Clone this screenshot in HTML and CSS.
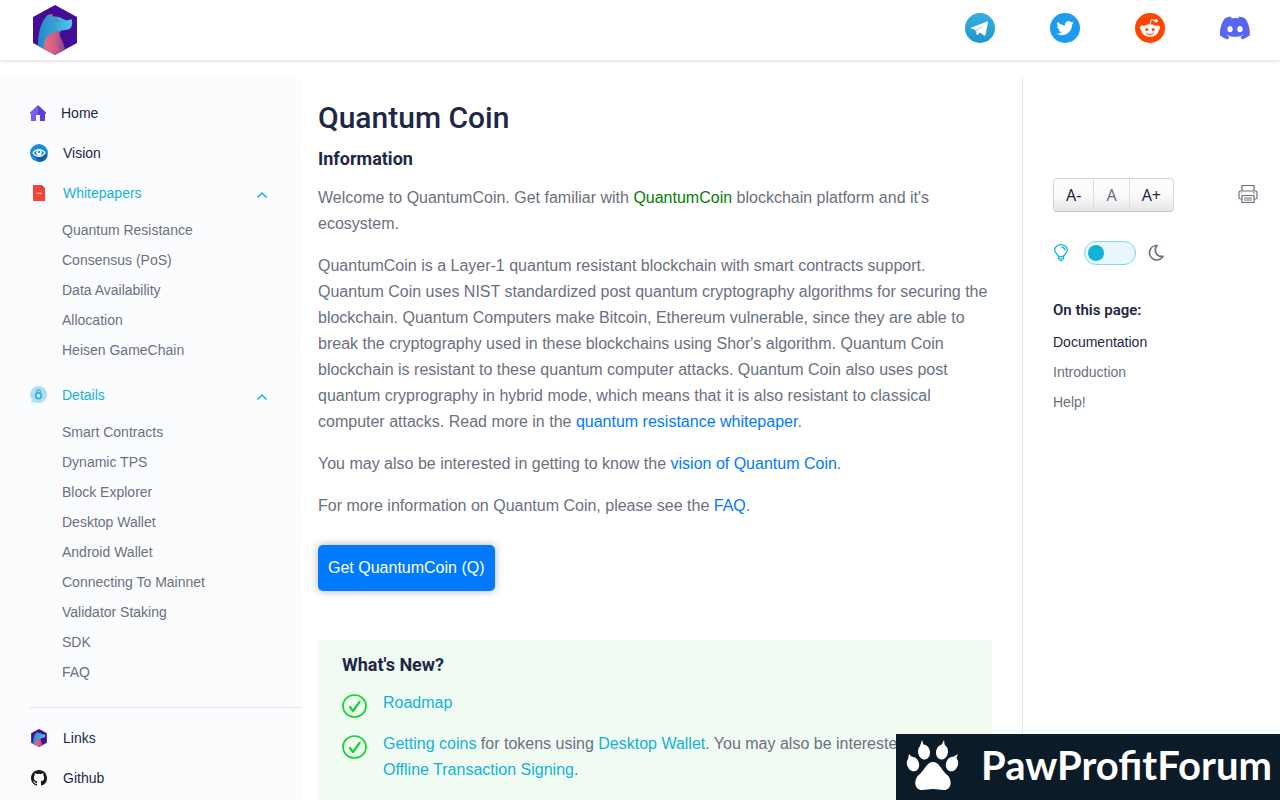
FILE: index.html
```html
<!DOCTYPE html>
<html lang="en">
<head>
<meta charset="utf-8">
<meta name="viewport" content="width=device-width, initial-scale=1">
<title>Quantum Coin</title>
<link rel="stylesheet" href="styles.css">
</head>
<body>
<svg class="defs" aria-hidden="true">
  <defs>
    <linearGradient id="gBlue" x1="0" y1="0" x2="1" y2="0"><stop offset="0" stop-color="#2b83c6"/><stop offset=".5" stop-color="#33a6d8"/><stop offset="1" stop-color="#4cc9e6"/></linearGradient>
    <linearGradient id="gPink" x1="0" y1="0" x2="1" y2="0"><stop offset="0" stop-color="#f2697c"/><stop offset=".5" stop-color="#d05f88"/><stop offset="1" stop-color="#8f4796"/></linearGradient>
    <linearGradient id="gTele" x1="0" y1="0" x2="0" y2="1"><stop offset="0" stop-color="#37aee2"/><stop offset="1" stop-color="#1e96c8"/></linearGradient>
    <clipPath id="hex"><path d="M22 0 44 12V38L22 50 0 38V12z"/></clipPath>
    <symbol id="wolf" viewBox="0 0 44 50">
      <g clip-path="url(#hex)">
        <path fill="#430d96" d="M0 0h44v50H0z"/>
        <path fill="url(#gBlue)" d="M5 46C5 38 5 30 7 24C9 17 12 11 16 9.500L18.500 9L20 11.500C25 11 29 13 32 15C35 15.500 37 15 38.500 14C40 19 39 23.500 35 24.500C32 25.500 29 24.500 27 26.500L20 48z"/>
        <path fill="url(#gPink)" d="M11 46C10 37 13 28 26 25.500C26 32 31 36 32 46L22 52z"/>
        <path fill="#8b4a98" opacity=".35" d="M26 25.500C25 33 29 40 27 50L32 46C31 36 26 32 26 25.500z"/>
        <path fill="#c9527d" d="M17 9.500l2-.5 1 2.700L18 11.500zM21.500 14.500l4.500.5-1.500 1.500-2.500-.5z"/>
      </g>
    </symbol>
    <symbol id="check" viewBox="0 0 25 24">
      <ellipse cx="12.500" cy="12" rx="11.500" ry="11" fill="none" stroke="#12d62f" stroke-width="1.700"/>
      <path d="M8 13l3 4 6.500-9" fill="none" stroke="#12d62f" stroke-width="2.200" stroke-linecap="round" stroke-linejoin="round"/>
    </symbol>
    <symbol id="up" viewBox="0 0 12 8"><path d="M1.500 6.500 6 2l4.500 4.500" fill="none" stroke="#14b1d9" stroke-width="1.500"/></symbol>
  </defs>
</svg>

<header class="topbar">
  <a class="brand" href="#" aria-label="Quantum Coin"><svg width="44" height="50"><use href="#wolf"/></svg></a>
  <nav class="social" aria-label="Community">
    <a href="#" aria-label="Telegram"><svg width="30" height="30" viewBox="0 0 30 30"><circle cx="15" cy="15" r="15" fill="url(#gTele)"/><path fill="#fff" d="M6 14.800 22.200 8.600c.6-.2 1 .1.800.9l-2.500 12.200c-.2.900-.8 1.100-1.500.7l-4-3-2 2.200c-.8.800-1.200.400-1.400-.3l-1.200-4.500-4.300-1.300c-.7-.3-.7-.5-.1-.7z"/><path fill="#c8daea" d="m10.600 16.700 9.400-5.800-7.500 7.100-.5 3.500z"/></svg></a>
    <a href="#" aria-label="Twitter"><svg width="30" height="30" viewBox="0 0 30 30"><circle cx="15" cy="15" r="15" fill="#1d9bf0"/><path transform="translate(6.500 6.500) scale(.72)" fill="#fff" d="M23.950 4.570a10 10 0 0 1-2.820.78 4.960 4.960 0 0 0 2.160-2.730c-.95.560-2 .960-3.130 1.190a4.920 4.920 0 0 0-8.380 4.480C7.690 8.100 4.070 6.130 1.640 3.160a4.920 4.920 0 0 0 1.520 6.570 4.900 4.900 0 0 1-2.230-.61v.06a4.920 4.920 0 0 0 3.950 4.830 5 5 0 0 1-2.210.08 4.940 4.940 0 0 0 4.600 3.420A9.870 9.870 0 0 1 0 19.540a14 14 0 0 0 7.550 2.210c9.050 0 14-7.500 14-13.980 0-.21 0-.42-.02-.63a9.940 9.940 0 0 0 2.460-2.550z"/></svg></a>
    <a href="#" aria-label="Reddit"><svg width="30" height="30" viewBox="0 0 30 30"><circle cx="15" cy="15" r="15" fill="#ff4500"/><g fill="#fff"><ellipse cx="15" cy="17.500" rx="8.600" ry="6.300"/><circle cx="7.200" cy="14.800" r="2.300"/><circle cx="22.800" cy="14.800" r="2.300"/><circle cx="21.200" cy="7.800" r="1.700"/></g><path d="M15 11.500 16.200 6.600 21 7.700" fill="none" stroke="#fff"/><g fill="#ff4500"><circle cx="11.800" cy="16.500" r="1.500"/><circle cx="18.200" cy="16.500" r="1.500"/></g><path d="M11.500 20.300c2 1.700 5 1.700 7 0" fill="none" stroke="#ff4500" stroke-linecap="round"/></svg></a>
    <a href="#" aria-label="Discord"><svg width="30" height="30" viewBox="0 0 24 24"><path fill="#5865f2" d="M20.320 4.370a19.800 19.800 0 0 0-4.890-1.520.07.07 0 0 0-.08.040c-.21.380-.44.870-.61 1.250a18.300 18.300 0 0 0-5.490 0 12.600 12.600 0 0 0-.62-1.250.08.08 0 0 0-.08-.04 19.700 19.700 0 0 0-4.880 1.520C.53 9.050-.32 13.580.1 18.060a.08.08 0 0 0 .03.060 19.900 19.900 0 0 0 5.990 3.030.08.08 0 0 0 .08-.03c.46-.63.870-1.300 1.230-1.990a.08.08 0 0 0-.04-.11 13.100 13.100 0 0 1-1.870-.89.08.08 0 0 1 0-.13l.37-.29c3.930 1.790 8.180 1.790 12.060 0l.37.290c.040.040.040.100 0 .13-.6.350-1.220.650-1.870.89a.08.08 0 0 0-.04.110c.36.700.770 1.360 1.220 1.990.020.030.050.040.080.030a19.800 19.800 0 0 0 6.030-3.090c.5-5.180-.84-9.670-3.550-13.690zM8.020 15.330c-1.180 0-2.160-1.080-2.160-2.420s.96-2.420 2.160-2.420c1.210 0 2.180 1.100 2.160 2.420 0 1.340-.96 2.420-2.160 2.420zm7.970 0c-1.180 0-2.160-1.080-2.160-2.420s.96-2.420 2.160-2.420c1.210 0 2.180 1.100 2.160 2.420 0 1.340-.95 2.420-2.160 2.420z"/></svg></a>
  </nav>
</header>

<div class="page">
  <aside class="sidebar">
    <nav aria-label="Main">
      <a class="item" href="#"><svg class="ico" viewBox="0 0 18 18"><path fill="#7b5cf0" d="M8 1 0 8.500V10h1v7h5v-6h2z"/><path fill="#5b3de0" d="M8 1l8 7.500V10h-1v7h-5v-6H8z"/></svg><span class="home-label">Home</span></a>
      <a class="item" href="#"><svg class="ico" viewBox="0 0 18 18"><circle cx="9" cy="9" r="9" fill="#1b8ade"/><path fill="#145f9e" d="M3 10 9 18a9 9 0 0 0 8.500-6L15 9l-6 4z"/><path d="M3 9c3-4.500 9-4.500 12 0-3 4.500-9 4.500-12 0z" fill="none" stroke="#fff" stroke-width="1.300"/><circle cx="9" cy="9" r="2.700" fill="#fff"/><path d="M9 7v2" stroke="#1565a5" stroke-width="1.500"/></svg><span>Vision</span></a>
      <a class="item open" href="#"><svg class="ico" viewBox="0 0 18 18"><path fill="#f04438" d="M3 1h8.500L15 4.500V17H3z"/><path fill="#bd3028" d="M11.500 1 15 4.500h-3.500z"/><path d="M6.500 9.300h5" stroke="#fbb" stroke-width="1.200"/></svg><span>Whitepapers</span><svg class="caret" width="12" height="8"><use href="#up"/></svg></a>
      <ul class="sub">
        <li><a href="#">Quantum Resistance</a></li>
        <li><a href="#">Consensus (PoS)</a></li>
        <li><a href="#">Data Availability</a></li>
        <li><a href="#">Allocation</a></li>
        <li><a href="#">Heisen GameChain</a></li>
      </ul>
      <a class="item open" href="#"><svg class="ico" viewBox="0 0 18 18"><path fill="#ade0f5" d="M8.500 0a8.500 8.500 0 1 1-4 16L1 17l.8-3.500A8.500 8.500 0 0 1 8.500 0z"/><circle cx="8.500" cy="9.800" r="2.700" fill="#fff" stroke="#38b3dc" stroke-width="2"/><path d="M6.500 7V5.800a2 2 0 0 1 4 0V7" fill="none" stroke="#38b3dc" stroke-width="1.200"/></svg><span class="details-label">Details</span><svg class="caret" width="12" height="8"><use href="#up"/></svg></a>
      <ul class="sub">
        <li><a href="#">Smart Contracts</a></li>
        <li><a href="#">Dynamic TPS</a></li>
        <li><a href="#">Block Explorer</a></li>
        <li><a href="#">Desktop Wallet</a></li>
        <li><a href="#">Android Wallet</a></li>
        <li><a href="#">Connecting To Mainnet</a></li>
        <li><a href="#">Validator Staking</a></li>
        <li><a href="#">SDK</a></li>
        <li><a href="#">FAQ</a></li>
      </ul>
      <hr class="rule">
      <a class="item" href="#"><svg class="ico"><use href="#wolf"/></svg><span>Links</span></a>
      <a class="item" href="#"><svg class="ico" viewBox="-1 -1 18 18"><path fill="#191717" d="M8 0C3.580 0 0 3.580 0 8c0 3.540 2.290 6.530 5.470 7.590.4.070.550-.17.550-.38 0-.19-.01-.82-.01-1.490-2.010.370-2.530-.49-2.690-.94-.09-.23-.48-.94-.82-1.130-.28-.15-.68-.52-.01-.53.630-.01 1.080.580 1.230.820.720 1.210 1.870.870 2.330.660.070-.52.280-.87.510-1.070-1.780-.2-3.640-.89-3.640-3.950 0-.87.310-1.590.820-2.150-.08-.2-.36-1.020.080-2.120 0 0 .67-.21 2.200.820a7.600 7.600 0 0 1 4 0c1.530-1.040 2.200-.82 2.200-.82.440 1.100.160 1.920.080 2.120.510.560.820 1.270.820 2.150 0 3.070-1.870 3.750-3.650 3.950.290.250.540.730.540 1.480 0 1.070-.01 1.930-.01 2.200 0 .21.150.460.550.380A8 8 0 0 0 16 8c0-4.420-3.580-8-8-8z"/></svg><span>Github</span></a>
    </nav>
  </aside>

  <main class="content">
    <h1>Quantum Coin</h1>
    <h2>Information</h2>
    <p>Welcome to QuantumCoin. Get familiar with <span class="green">QuantumCoin</span> blockchain platform and it's ecosystem.</p>
    <p>QuantumCoin is a Layer-1 quantum resistant blockchain with smart contracts support. Quantum Coin uses NIST standardized post quantum cryptography algorithms for securing the blockchain. Quantum Computers make Bitcoin, Ethereum vulnerable, since they are able to break the cryptography used in these blockchains using Shor's algorithm. Quantum Coin blockchain is resistant to these quantum computer attacks. Quantum Coin also uses post quantum cryprography in hybrid mode, which means that it is also resistant to classical computer attacks. Read more in the <a class="link" href="#">quantum resistance whitepaper</a>.</p>
    <p>You may also be interested in getting to know the <a class="link" href="#">vision of Quantum Coin</a>.</p>
    <p>For more information on Quantum Coin, please see the <a class="link" href="#">FAQ</a>.</p>
    <button class="cta" type="button">Get QuantumCoin (Q)</button>
    <section class="news">
      <h2>What's New?</h2>
      <ul class="news-list">
        <li><svg class="tick"><use href="#check"/></svg><span><a class="teal" href="#">Roadmap</a></span></li>
        <li><svg class="tick"><use href="#check"/></svg><span><a class="teal" href="#">Getting coins</a> for tokens using <a class="teal" href="#">Desktop Wallet</a>. You may also be interested in <a class="teal" href="#">Offline Transaction Signing</a>.</span></li>
      </ul>
    </section>
  </main>

  <aside class="tools">
    <div class="tool-row">
      <div class="sizes" role="group" aria-label="Text size"><button type="button">A-</button><button class="mid" type="button">A</button><button type="button">A+</button></div>
      <button class="plain" type="button" aria-label="Print"><svg width="20" height="20" viewBox="0 0 20 20" fill="none" stroke="#6a6f82" stroke-width="1.200"><path d="M4 7V1.500h12V7M4 15H2.500A1.500 1.500 0 0 1 1 13.500V8.500A1.500 1.500 0 0 1 2.500 7h15A1.500 1.500 0 0 1 19 8.500v5a1.500 1.500 0 0 1-1.500 1.500H16M4 11.500h12v7H4zM6 14h8M6 16h8M3 9h1M15 9h2"/></svg></button>
    </div>
    <div class="theme">
      <svg width="16" height="18" viewBox="0 0 16 18" fill="none" stroke="#14b1d9" stroke-width="1.300"><path d="M5.500 12.500c0-2-3.800-3-3.800-6.200a6.300 5.600 0 0 1 12.600 0c0 3.200-3.800 4.200-3.800 6.200zM5.500 12.500v2.300h5v-2.300M6.500 16.700h3M8.500 3A3.500 3.500 0 0 1 12 6.500"/></svg>
      <input class="switch" type="checkbox" role="switch" aria-label="Dark mode">
      <svg width="16" height="18" viewBox="1 0 16 18" fill="none" stroke="#6a6f82" stroke-width="1.700" stroke-linejoin="round"><path d="M10 1.500A7.200 7.200 0 1 0 16 12.300C10 13.500 6 7 10 1.500z"/></svg>
    </div>
    <nav class="toc" aria-labelledby="toc-title">
      <h3 id="toc-title">On this page:</h3>
      <a class="active" href="#">Documentation</a>
      <a href="#">Introduction</a>
      <a href="#">Help!</a>
    </nav>
  </aside>
</div>

<div class="badge">
  <svg width="54" height="54" viewBox="0 0 54 54" fill="#fff"><path d="M27 24c6 0 8 7 13 12 7 5 6 16-2 16-4 0-7-1-11-1s-7 1-11 1c-8 0-9-11-2-16 5-5 7-12 13-12z"/><ellipse cx="7" cy="26" rx="6" ry="7.500" transform="rotate(-20 7 26)"/><ellipse cx="18" cy="14" rx="6" ry="7.500" transform="rotate(-10 18 14)"/><ellipse cx="36" cy="14" rx="6" ry="7.500" transform="rotate(10 36 14)"/><ellipse cx="46" cy="26" rx="6" ry="7.500" transform="rotate(20 46 26)"/><path d="M14 8l2-6 2 6zM35 8l3-6 1 7zM2 21l1-5 4 4zM47 19l5-3-2 5z"/></svg>
  <span>PawProfitForum</span>
</div>
</body>
</html>
```

FILE: styles.css
```css
* { box-sizing: border-box; }
body {
  margin: 0;
  height: 100vh;
  overflow: hidden;
  display: flex;
  flex-direction: column;
  background: #fff;
  color: #6b707f;
  font: 16px/26px "Liberation Sans", Arial, sans-serif;
}
a { color: inherit; text-decoration: none; }
ul { list-style: none; margin: 0; padding: 0; }
h1, h2, h3 { margin: 0; color: #1d2746; font-family: Roboto, sans-serif; }
button { font: inherit; cursor: pointer; }
svg { display: block; flex: none; }
.defs { position: absolute; width: 0; height: 0; }

.topbar {
  flex: none;
  display: flex;
  justify-content: space-between;
  align-items: center;
  height: 60px;
  padding: 0 30px 0 33px;
  box-shadow: 0 1px 4px rgba(0, 0, 0, .16);
}
.social { display: flex; gap: 55px; padding-bottom: 4px; }

.page {
  flex: 1;
  min-height: 0;
  margin-top: 18px;
  display: grid;
  grid-template-columns: 302px minmax(0, 1fr) 258px;
}

.sidebar {
  overflow: hidden;
  padding: 15px 0 0 30px;
  background: #fbfcfe;
  font-size: 14px;
}
.item {
  display: flex;
  align-items: center;
  gap: 15px;
  height: 40px;
  padding-right: 34px;
  color: #1d2746;
}
.item.open { color: #14b1d9; }
.ico { width: 18px; height: 18px; }
.home-label { margin-left: -2px; }
.details-label { margin-left: -1px; }
.caret { margin: 3px 0 0 auto; }
.sub { padding: 2px 0 10px 32px; line-height: 30px; }
.rule { margin: 10px 0; border: 0; border-top: 1px solid #e1e4ea; }

.content {
  display: flex;
  flex-direction: column;
  align-items: flex-start;
  padding: 22px 30px 0 16px;
  overflow: hidden;
}
h1 { font-size: 30px; line-height: 36px; font-weight: 500; }
h2 { font-size: 18px; line-height: 22px; font-weight: 700; }
.content h1 { margin-bottom: 12px; }
.content > h2 { margin-bottom: 15px; }
p { margin: 0 0 16px; }
.green { color: #008000; }
.link { color: #007bff; }
.teal { color: #14b1d9; }
.cta {
  flex: none;
  margin: 10px 0 49px;
  padding: 10px;
  border: 0;
  border-radius: 5px;
  background: #007bff;
  color: #fff;
  box-shadow: 0 0 8px rgba(0, 0, 0, .3);
}
.news {
  flex: 1 0 auto;
  align-self: stretch;
  padding: 14px 24px;
  border-radius: 3px;
  background: #f0fcf2;
}
.news-list { display: grid; gap: 13px; margin-top: 14px; }
.news-list li { display: flex; gap: 16px; }
.tick { width: 25px; height: 24px; margin-top: 4px; }

.tools { padding: 100px 22px 0 30px; border-left: 1px solid #e6e8ec; }
.tool-row { display: flex; justify-content: space-between; align-items: center; }
.sizes {
  display: flex;
  border: 1px solid #d5d6da;
  border-bottom-color: #c4c5ca;
  border-radius: 4px;
  background: linear-gradient(#fff, #fafafa 50%, #e6e6e8);
  overflow: hidden;
}
.sizes button {
  height: 32px;
  padding: 0 12px;
  border: 0;
  background: none;
  color: #1d2746;
  font-family: "Noto Sans", sans-serif;
}
.sizes button + button { border-left: 1px solid #dcdde1; }
.sizes .mid { color: #6b707f; }
.plain { padding: 0; border: 0; background: none; }
.plain svg { margin-top: -3px; }
.theme { display: flex; align-items: center; gap: 12px; margin-top: 29px; }
.theme .switch { margin-left: 3px; }
.switch {
  appearance: none;
  width: 52px;
  height: 24px;
  margin: 0;
  padding: 3px;
  border: 1px solid #7fd9ec;
  border-radius: 12px;
  background: #e8f7fc;
}
.switch::before {
  content: "";
  display: block;
  width: 16px;
  height: 16px;
  border-radius: 50%;
  background: #14b1d9;
}
.toc { display: grid; margin-top: 34px; font-size: 14px; line-height: 30px; }
.toc h3 { font-size: 15px; line-height: 22px; font-weight: 600; margin-bottom: 6px; }
.toc .active { color: #1d2746; }

.badge {
  position: fixed;
  right: 0;
  bottom: 0;
  display: flex;
  align-items: center;
  gap: 21px;
  width: 384px;
  height: 66px;
  padding: 0 0 4px 10px;
  background: #0b1b27;
  color: #fff;
  font: 700 40px/60px Lato, sans-serif;
}
```
